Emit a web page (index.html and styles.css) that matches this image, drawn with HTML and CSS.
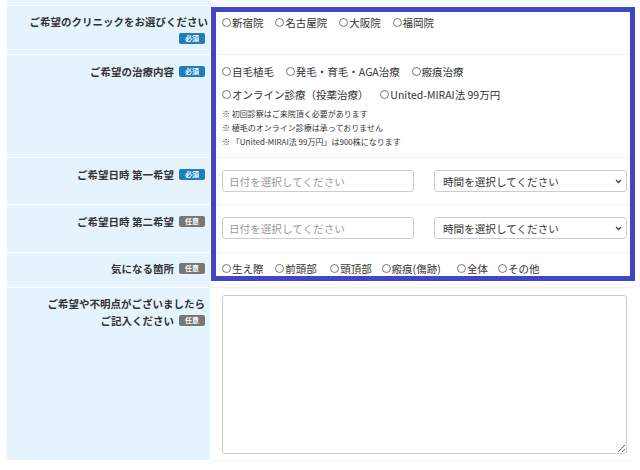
FILE: index.html
```html
<!DOCTYPE html>
<html lang="ja">
<head>
<meta charset="utf-8">
<title>予約フォーム</title>
<link rel="stylesheet" href="styles.css">
</head>
<body>
<div class="page">
  <div class="form">
    <div class="row row-prev">
      <div class="lbl"></div>
      <div class="fld"></div>
    </div>

    <div class="row r1">
      <div class="lbl">ご希望のクリニックをお選びください<span class="badge req">必須</span></div>
      <div class="fld">
        <div class="radios">
          <label class="opt"><span class="rd"></span>新宿院</label>
          <label class="opt"><span class="rd"></span>名古屋院</label>
          <label class="opt"><span class="rd"></span>大阪院</label>
          <label class="opt"><span class="rd"></span>福岡院</label>
        </div>
      </div>
    </div>

    <div class="row r2">
      <div class="lbl">ご希望の治療内容<span class="badge req">必須</span></div>
      <div class="fld">
        <div class="radios">
          <label class="opt"><span class="rd"></span>自毛植毛</label>
          <label class="opt"><span class="rd"></span>発毛・育毛・AGA治療</label>
          <label class="opt"><span class="rd"></span>瘢痕治療</label>
        </div>
        <div class="radios line2">
          <label class="opt"><span class="rd"></span>オンライン診療（投薬治療）</label>
          <label class="opt"><span class="rd"></span>United-MIRAI法 99万円</label>
        </div>
        <ul class="notes">
          <li>※ 初回診察はご来院頂く必要があります</li>
          <li>※ 植毛のオンライン診療は承っておりません</li>
          <li>※ 「United-MIRAI法 99万円」は900株になります</li>
        </ul>
      </div>
    </div>

    <div class="row r3">
      <div class="lbl">ご希望日時 第一希望<span class="badge req">必須</span></div>
      <div class="fld dt">
        <input class="date" type="text" placeholder="日付を選択してください">
        <select class="time"><option>時間を選択してください</option></select>
      </div>
    </div>

    <div class="row r4">
      <div class="lbl">ご希望日時 第二希望<span class="badge opt-b">任意</span></div>
      <div class="fld dt">
        <input class="date" type="text" placeholder="日付を選択してください">
        <select class="time"><option>時間を選択してください</option></select>
      </div>
    </div>

    <div class="row r5">
      <div class="lbl">気になる箇所<span class="badge opt-b">任意</span></div>
      <div class="fld">
        <div class="radios">
          <label class="opt"><span class="rd"></span>生え際</label>
          <label class="opt wide"><span class="rd"></span>前頭部</label>
          <label class="opt narrow"><span class="rd"></span>頭頂部</label>
          <label class="opt wider"><span class="rd"></span>瘢痕(傷跡)</label>
          <label class="opt narrow"><span class="rd"></span>全体</label>
          <label class="opt"><span class="rd"></span>その他</label>
        </div>
      </div>
    </div>

    <div class="row r6">
      <div class="lbl">ご希望や不明点がございましたら<br>ご記入ください<span class="badge opt-b">任意</span></div>
      <div class="fld">
        <textarea class="memo"></textarea>
      </div>
    </div>
  </div>
  <div class="highlight"></div>
</div>
</body>
</html>
```
FILE: styles.css
```css
* { box-sizing: border-box; }
html, body { margin: 0; padding: 0; background: #fff; }
body {
  font-family: "Noto Sans CJK JP", "Noto Sans", sans-serif;
  color: #333;
  font-size: 10.5px;
}
.page { position: relative; width: 640px; height: 470px; overflow: hidden; }
.form { margin-left: 7px; width: 626px; }

.row { display: grid; grid-template-columns: 203px 423px; }
.lbl {
  background: #e5f4fc;
  border-bottom: 1px solid #fff;
  text-align: right;
  font-weight: bold;
  line-height: 17px;
  padding: 7.5px 5px 0 0;
}
.fld {
  background: #fff;
  border-bottom: 1px solid #eaf3f9;
  padding: 7.5px 6px 0 12px;
}

.row-prev .lbl, .row-prev .fld { height: 6px; padding: 0; }
.row-prev .fld { background: #f6fbfe; }

.r1 .lbl { padding-top: 6.5px; padding-right: 2px; height: 49px; }
.r1 .lbl .badge { margin-right: 3px; }
.r2 .fld { padding-bottom: 8px; }
.r3 .fld { padding-top: 12px; padding-bottom: 12px; }
.r4 .fld { padding-top: 12px; padding-bottom: 13px; }
.r5 .lbl { padding-top: 6.5px; }
.r5 .fld { padding-top: 6.5px; height: 35px; }
.r6 .lbl { padding-top: 6.5px; }
.r6 .fld { padding-top: 7px; padding-bottom: 6px; }

.badge {
  display: inline-block;
  width: 26px;
  height: 11px;
  line-height: 11px;
  margin-left: 5px;
  border-radius: 2px;
  color: #fff;
  font-size: 7px;
  font-weight: bold;
  text-align: center;
  vertical-align: middle;
  position: relative;
  top: -1px;
}
.badge.req { background: #1d7dbd; }
.badge.opt-b { background: #777; }

.radios { line-height: 17px; white-space: nowrap; }
.radios.line2 { margin-top: 6px; }
.opt { display: inline-block; margin-right: 9.5px; }
.opt.wide { margin-right: 11px; }
.opt.narrow { margin-right: 7.5px; }
.opt.wider { margin-right: 14px; }
.rd {
  display: inline-block;
  width: 9px;
  height: 9px;
  border: 1px solid #777;
  border-radius: 50%;
  margin-right: 1px;
  vertical-align: middle;
  position: relative;
  top: -1px;
}

.notes {
  list-style: none;
  margin: 4.5px 0 0;
  padding: 0;
  font-size: 8px;
  line-height: 14px;
}

.dt { display: flex; gap: 20px; align-items: flex-start; }
.date, .time {
  height: 22px;
  border: 1px solid #ccc;
  border-radius: 3px;
  background-color: #fff;
  font-family: "Noto Sans CJK JP", "Noto Sans", sans-serif;
  font-size: 10.6px;
  color: #333;
  margin: 0;
}
.date { width: 192px; padding: 0 6px; }
.date::placeholder { color: #999; }
.time {
  width: 193px;
  padding: 0 18px 0 8px;
  -webkit-appearance: none;
  appearance: none;
  background-image: url("data:image/svg+xml,%3Csvg xmlns='http://www.w3.org/2000/svg' width='7' height='5' viewBox='0 0 7 5'%3E%3Cpath d='M1 1l2.5 2.5L6 1' fill='none' stroke='%23444' stroke-width='1.3'/%3E%3C/svg%3E");
  background-repeat: no-repeat;
  background-position: right 4px center;
}

.memo {
  display: block;
  width: 405px;
  height: 159px;
  border: 1px solid #ccc;
  border-radius: 3px;
  margin: 0;
  resize: both;
}

.highlight {
  position: absolute;
  left: 211px;
  top: 7px;
  width: 424px;
  height: 274px;
  border: 5px solid #4444c8;
  pointer-events: none;
}
```
